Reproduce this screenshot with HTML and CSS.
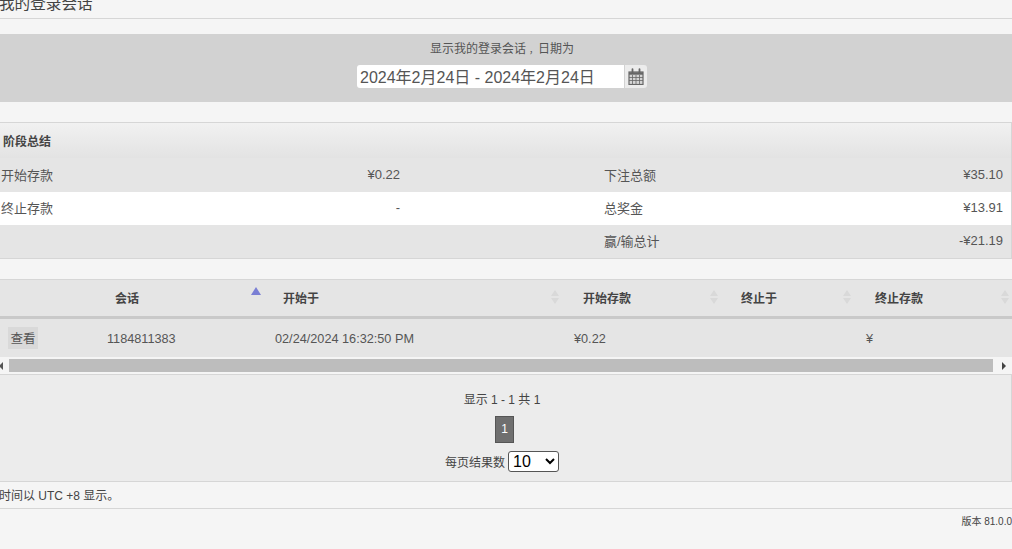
FILE: index.html
```html
<!DOCTYPE html>
<html lang="zh-CN">
<head>
<meta charset="utf-8">
<title>我的登录会话</title>
<link rel="stylesheet" href="styles.css">
</head>
<body>
<div class="page">
  <h1 class="title">我的登录会话</h1>

  <section class="filter">
    <div class="filter-label">显示我的登录会话<span class="comma">，</span>日期为</div>
    <div class="date-group">
      <input class="date-input" type="text" value="2024年2月24日 - 2024年2月24日">
      <button class="date-btn" type="button" aria-label="日历">
        <svg width="16" height="17" viewBox="0 0 16 17" fill="none" stroke="#666" stroke-width="1">
          <rect x="1" y="4" width="14" height="12.5" fill="#777" fill-opacity=".2" stroke-width="1.2"/>
          <path d="M1 5.5h14" stroke-width="2.4"/>
          <path d="M1 9.5h14M1 12.5h14M4.5 7v9M8 7v9M11.5 7v9" stroke-opacity=".8"/>
          <path d="M4.5 1.2v3.6M11.5 1.2v3.6" stroke-width="1.8" stroke-linecap="round"/>
        </svg>
      </button>
    </div>
  </section>

  <section class="summary">
    <div class="summary-head">阶段总结</div>
    <div class="summary-row">
      <div class="s-label">开始存款</div><div class="s-value">¥0.22</div>
      <div class="s-label s-label-right">下注总额</div><div class="s-value s-value-right">¥35.10</div>
    </div>
    <div class="summary-row summary-row-alt">
      <div class="s-label">终止存款</div><div class="s-value">-</div>
      <div class="s-label s-label-right">总奖金</div><div class="s-value s-value-right">¥13.91</div>
    </div>
    <div class="summary-row">
      <div class="s-label"></div><div class="s-value"></div>
      <div class="s-label s-label-right">赢/输总计</div><div class="s-value s-value-right">-¥21.19</div>
    </div>
  </section>

  <section class="sessions">
    <div class="grid grid-head">
      <div class="th"></div>
      <div class="th th-wide"><span>会话</span><i class="sort-asc"></i></div>
      <div class="th th-wide"><span>开始于</span><i class="sort"></i></div>
      <div class="th th-wider"><span>开始存款</span><i class="sort"></i></div>
      <div class="th th-wide"><span>终止于</span><i class="sort"></i></div>
      <div class="th th-wider"><span>终止存款</span><i class="sort"></i></div>
    </div>
    <div class="grid grid-body">
      <div class="td"><button class="view-btn" type="button">查看</button></div>
      <div class="td">1184811383</div>
      <div class="td">02/24/2024 16:32:50 PM</div>
      <div class="td">¥0.22</div>
      <div class="td"></div>
      <div class="td">¥</div>
    </div>
    <div class="scrollbar">
      <i class="arrow-left"></i>
      <div class="thumb"></div>
      <i class="arrow-right"></i>
    </div>
  </section>

  <section class="pager">
    <div class="pager-info">显示 1 - 1 共 1</div>
    <div class="pager-pages"><span class="page-current">1</span></div>
    <div class="pager-size">每页结果数 <select class="size-select"><option>10</option></select></div>
  </section>

  <div class="note">时间以 UTC +8 显示。</div>
  <div class="version">版本 81.0.0</div>
</div>
</body>
</html>
```

FILE: styles.css
```css
* { box-sizing: border-box; }
html, body { margin: 0; padding: 0; height: 100%; overflow: hidden; }
body {
  background: #f5f5f5;
  color: #444;
  font-family: "Liberation Sans", "Noto Sans CJK SC", sans-serif;
  font-size: 12px;
}
.page { width: 1012px; overflow: hidden; }

.title {
  margin: 0;
  height: 19px;
  border-bottom: 1px solid #d6d6d6;
  font-size: 15.6px;
  font-weight: 400;
  line-height: 7px;
  color: #444;
  text-indent: -1px;
  overflow: hidden;
}

.filter {
  margin-top: 15px;
  height: 68px;
  background: #d2d2d2;
  padding: 7px 8px 0 0;
  text-align: center;
  color: #555;
}
.filter-label { height: 16px; line-height: 15px; padding-top: 1px; }
.comma { margin-left: 3px; font-size: 9px; line-height: 1; }
.date-group { display: flex; justify-content: center; margin-top: 8px; }
.date-input {
  width: 267px;
  height: 23px;
  border: 0;
  border-radius: 3px 0 0 3px;
  background: #fff;
  padding: 0 3px 2px;
  font: 16px "Liberation Sans", "Noto Sans CJK SC", sans-serif;
  color: #555;
}
.date-btn {
  width: 23px;
  height: 23px;
  border: 0;
  border-left: 1px solid #d2d2d2;
  border-radius: 0 3px 3px 0;
  background: #ececec;
  padding: 0;
  display: flex;
  align-items: center;
  justify-content: center;
}

.summary {
  margin-top: 20px;
  border-top: 1px solid #d6d6d6;
  border-bottom: 1px solid #d6d6d6;
  border-right: 1px solid #d6d6d6;
}
.summary-head {
  height: 35px;
  padding-left: 3px;
  line-height: 38px;
  font-weight: 700;
  background: linear-gradient(#f1f1f1, #e3e3e3);
}
.summary-row {
  display: grid;
  grid-template-columns: 200px 200px 404px 1fr;
  height: 33px;
  background: #e5e5e5;
  font-size: 13px;
  line-height: 33px;
  align-items: start;
}
.summary-row:nth-of-type(2) { height: 34px; line-height: 35px; }
.summary-row-alt { background: #fff; }
.s-label { padding-left: 1px; color: #555; }
.s-label-right { padding-left: 204px; }
.s-value { text-align: right; margin-top: -1px; color: #555; }
.s-value-right { padding-right: 8px; }

.sessions { margin-top: 20px; border-top: 1px solid #d6d6d6; overflow: hidden; }
.grid {
  display: grid;
  grid-template-columns: 99px 168px 299px 159px 133px 158px;
  width: 1016px;
}
.grid-head { height: 39px; background: #e5e5e5; border-bottom: 3px solid #c9c9c9; }
.th {
  display: flex;
  justify-content: space-between;
  align-items: center;
  padding-right: 6px;
  padding-bottom: 2px;
  font-weight: 700;
}
.th-wide { padding-left: 16px; }
.th-wider { padding-left: 17px; }
.sort, .sort-asc {
  display: block;
  width: 10px;
  height: 14px;
  position: relative;
}
.sort::before, .sort::after, .sort-asc::before {
  content: "";
  position: absolute;
  left: 1px;
  border-left: 4px solid transparent;
  border-right: 4px solid transparent;
}
.sort::before { top: 0; border-bottom: 6px solid #d9d9d9; }
.sort::after { bottom: 0; border-top: 6px solid #d9d9d9; }
.sort-asc::before { top: -3px; left: 0; border-left-width: 5px; border-right-width: 5px; border-bottom: 8px solid #7a7fd4; }

.grid-body { height: 38px; background: #e5e5e5; font-size: 12.7px; }
.td { padding-left: 8px; line-height: 40px; color: #555; }
.view-btn {
  display: block;
  width: 30px;
  height: 22px;
  margin-top: 8px;
  border: 0;
  padding: 0 0 2px;
  background: #d9d9d9;
  color: #555;
  font: 12.5px "Liberation Sans", "Noto Sans CJK SC", sans-serif;
}
.scrollbar {
  display: flex;
  align-items: center;
  height: 15px;
  margin-top: 2px;
  padding-bottom: 2px;
  background: #f5f5f5;
}
.thumb { width: 984px; height: 13px; margin-left: 4px; background: #bdbdbd; }
.arrow-left { width: 0; margin-left: -1px; margin-right: 2px; border-top: 4px solid transparent; border-bottom: 4px solid transparent; border-right: 4px solid #555; }
.arrow-right { width: 0; margin-left: 9px; border-top: 4px solid transparent; border-bottom: 4px solid transparent; border-left: 4px solid #444; }

.pager {
  height: 108px;
  border-top: 1px solid #d6d6d6;
  border-bottom: 1px solid #d6d6d6;
  border-right: 1px solid #d6d6d6;
  background: #ececec;
  text-align: center;
  padding: 17px 8px 0 0;
}
.pager-info { line-height: 16px; padding-left: 1px; }
.pager-pages { display: flex; justify-content: center; margin-top: 8px; padding-left: 6px; }
.page-current {
  width: 19px;
  height: 27px;
  background: #6f6f6f;
  border: 1px solid #555;
  color: #fff;
  line-height: 25px;
}
.pager-size {
  display: flex;
  justify-content: center;
  align-items: center;
  gap: 3px;
  margin-top: 8px;
  padding-left: 1px;
}
.size-select {
  width: 51px;
  height: 21px;
  font: 16px "Liberation Sans", sans-serif;
  color: #000;
  background: #fff;
  border: 1px solid #555;
  border-radius: 3px;
  padding: 0;
}

.note {
  height: 27px;
  border-bottom: 1px solid #d6d6d6;
  line-height: 28px;
  text-indent: -1px;
}
.version {
  margin-top: 6px;
  font-size: 10px;
  line-height: 14px;
  text-align: right;
  white-space: nowrap;
}
```
